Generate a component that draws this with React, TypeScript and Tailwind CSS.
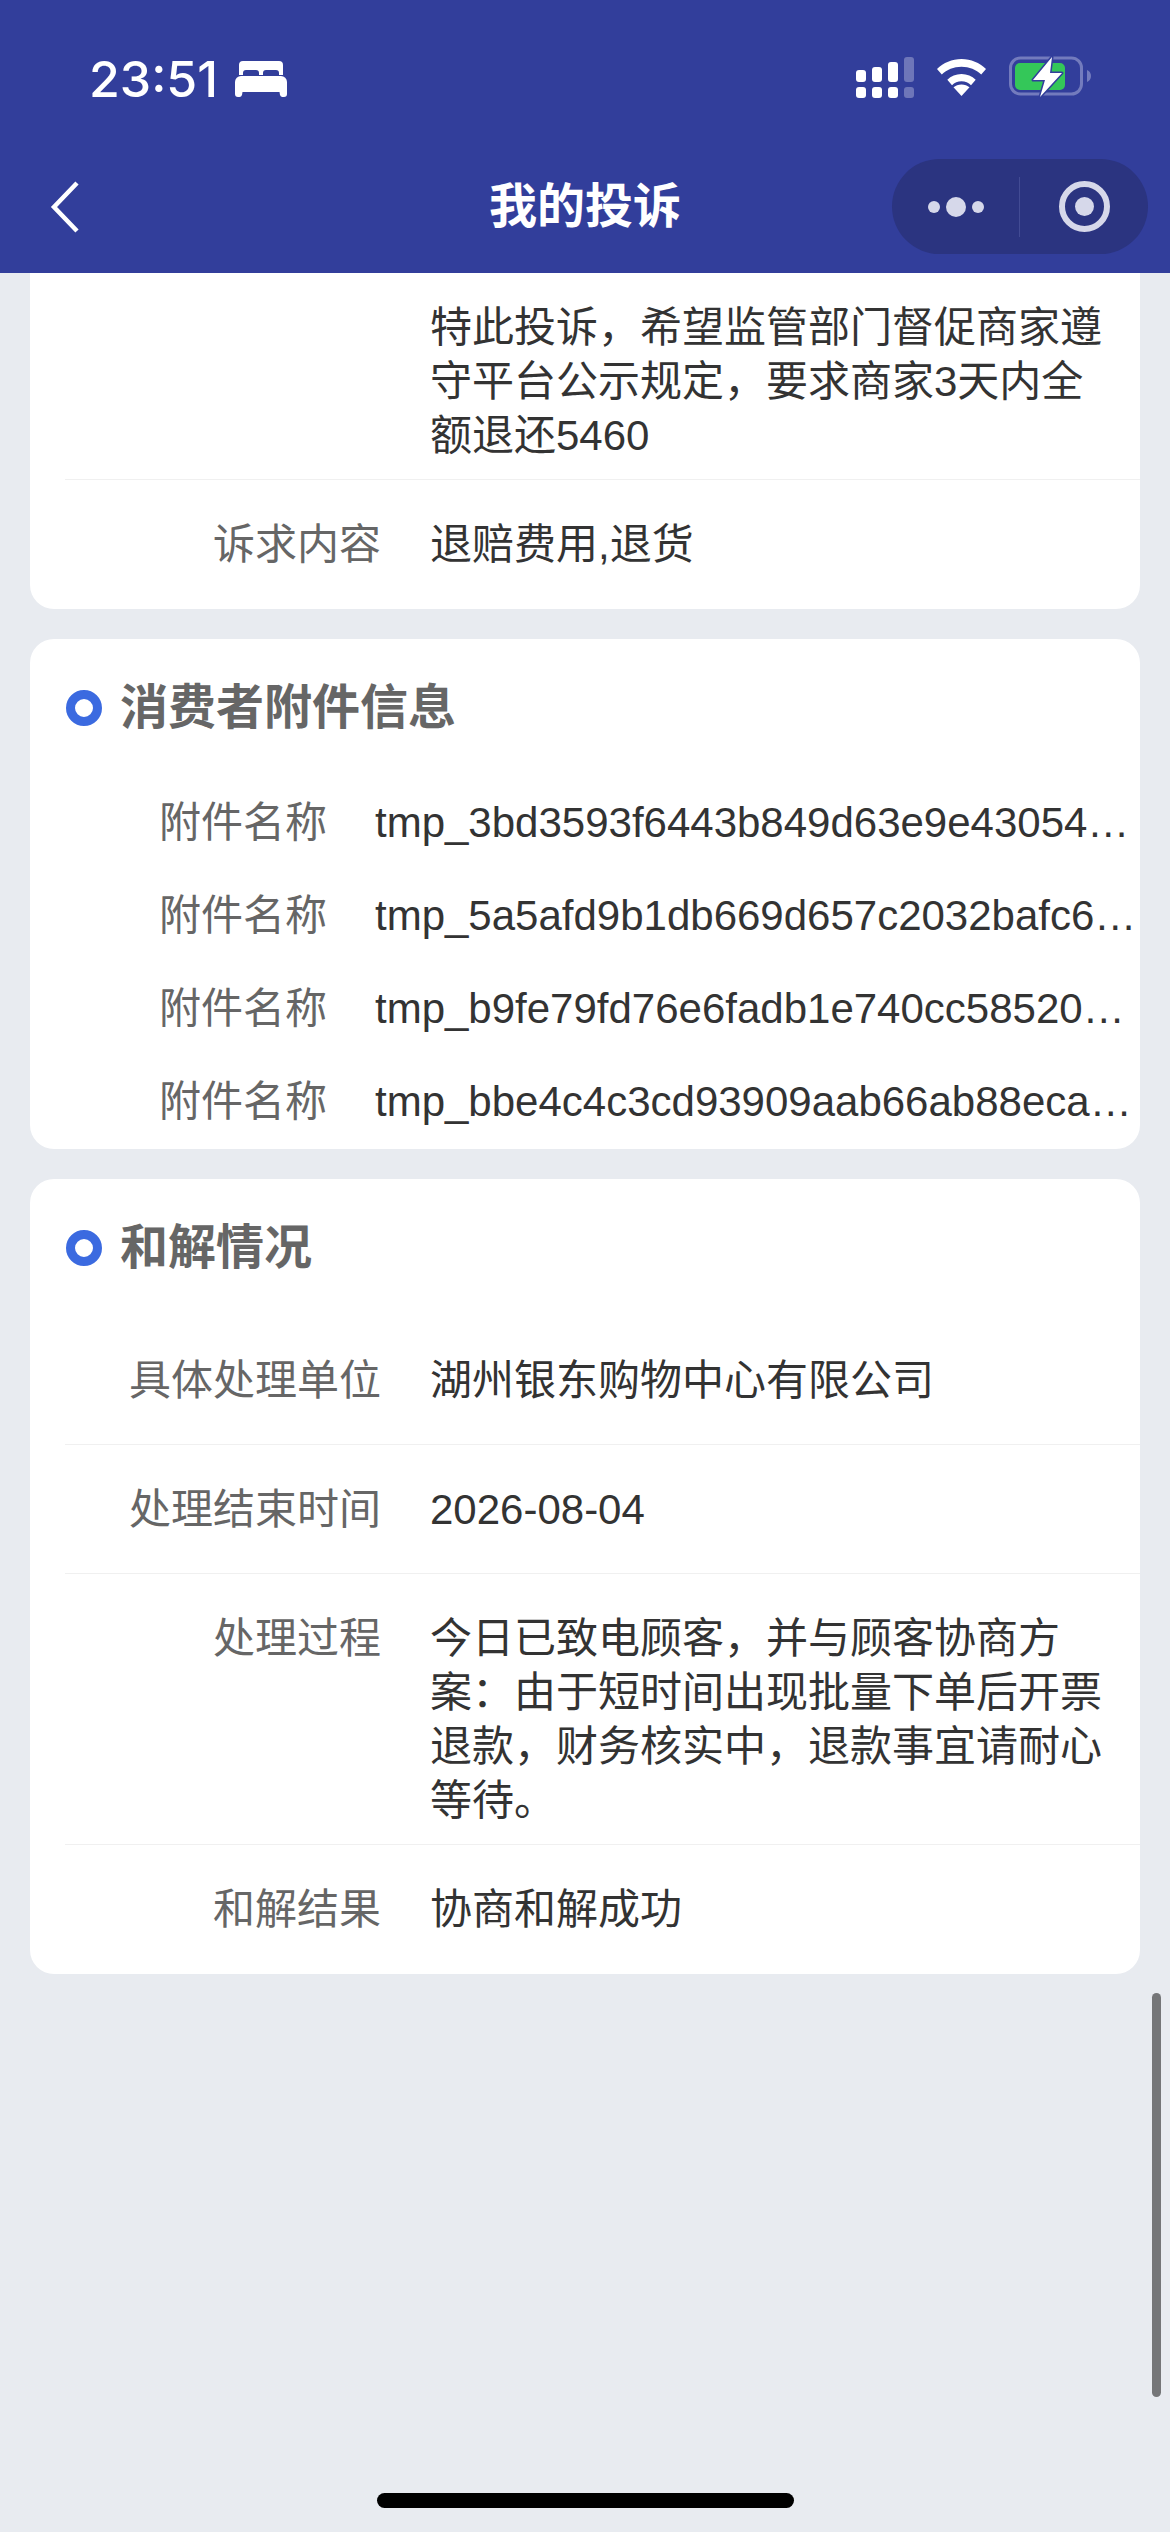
const font = "font-['Liberation_Sans','Noto_Sans_CJK_SC',sans-serif]";

const attachments = [
  "tmp_3bd3593f6443b849d63e9e430548a1c2d7e6f0b91.pdf",
  "tmp_5a5afd9b1db669d657c2032bafc6e41f7d28c03ab.pdf",
  "tmp_b9fe79fd76e6fadb1e740cc58520d3a97b41e6f02.pdf",
  "tmp_bbe4c4c3cd93909aab66ab88eca7f02d51c96e3b8.pdf",
];

function StatusIcons() {
  return (
    <svg width="240" height="44" viewBox="0 0 240 44" className="block">
      <g fill="#fff">
        <rect x="0" y="15" width="10" height="12" rx="3" />
        <rect x="16" y="12" width="10" height="15" rx="3" />
        <rect x="32" y="7" width="10" height="20" rx="3" />
        <rect x="0" y="32" width="10" height="11" rx="3" />
        <rect x="16" y="32" width="10" height="11" rx="3" />
        <rect x="32" y="32" width="10" height="11" rx="3" />
      </g>
      <rect x="48" y="2" width="10" height="25" rx="3" fill="#6e76b9" />
      <rect x="48" y="32" width="10" height="11" rx="3" fill="#6e76b9" />
      <path
        d="M105.5 4c9.5 0 18 3.800 24.500 10l-4.800 5.500c-5-4.800-12-7.800-19.700-7.800s-14.700 3-19.700 7.800L81 14c6.500-6.200 15-10 24.500-10z"
        fill="#fff"
      />
      <path
        d="M105.500 19c5.500 0 10.500 2.200 14.200 5.800l-4.700 5.400c-2.400-2.400-5.800-3.900-9.500-3.900s-7.100 1.500-9.500 3.900l-4.700-5.400c3.700-3.600 8.700-5.800 14.200-5.800z"
        fill="#fff"
      />
      <path d="M105.500 41l-8-8.700c2-1.800 4.900-2.900 8-2.900s6 1.100 8 2.900z" fill="#fff" />
      <rect x="154.500" y="3" width="71" height="36" rx="10" fill="none" stroke="#737bbd" strokeWidth="3" />
      <path d="M231 15c2.500 1 4 3 4 6s-1.500 5-4 6z" fill="#737bbd" />
      <rect x="159" y="8" width="50" height="27" rx="5" fill="#34c759" />
      <path
        d="M196 2 177 25h12l-5 17 22-24h-12z"
        fill="#fff"
        stroke="#323e9b"
        strokeWidth="3"
        strokeLinejoin="round"
        paintOrder="stroke"
      />
    </svg>
  );
}

function Capsule() {
  return (
    <div className="flex h-[95px] w-[256px] items-center rounded-full bg-[#2b3480]">
      <div className="flex h-[60px] w-[128px] items-center justify-center gap-[6px] border-r border-[#424b94]">
        <span className="h-[12px] w-[12px] rounded-full bg-[#d6d8ea]" />
        <span className="h-[20px] w-[20px] rounded-full bg-[#d6d8ea]" />
        <span className="h-[12px] w-[12px] rounded-full bg-[#d6d8ea]" />
      </div>
      <div className="flex flex-1 items-center justify-center">
        <div className="flex h-[51px] w-[51px] items-center justify-center rounded-full border-[6px] border-[#d6d8ea]">
          <span className="h-[19px] w-[19px] rounded-full bg-[#d6d8ea]" />
        </div>
      </div>
    </div>
  );
}

function Header() {
  return (
    <header className="h-[273px] bg-[#323e9b] text-white">
      <div className="flex h-[159px] items-start justify-between pl-[89px] pr-[74px] pt-[55px]">
        <div className="flex items-center gap-[17px]">
          <span className="font-['Inter',sans-serif] text-[50px] font-medium leading-[48px]">23:51</span>
          <svg width="52" height="36" viewBox="0 0 52 36" fill="#fff">
            <path d="M8 0h36a4 4 0 0 1 4 4v10h-4V12a3 3 0 0 0-3-3H31a3 3 0 0 0-3 3v2h-4v-2a3 3 0 0 0-3-3H11a3 3 0 0 0-3 3v2H4V4a4 4 0 0 1 4-4z" />
            <path d="M6 15h40a6 6 0 0 1 6 6v12a3 3 0 0 1-3 3h-1a3 3 0 0 1-3-2l-.500-3H7.500L7 34a3 3 0 0 1-3 2H3a3 3 0 0 1-3-3V21a6 6 0 0 1 6-6z" />
          </svg>
        </div>
        <StatusIcons />
      </div>
      <div className="grid grid-cols-[1fr_auto_1fr] items-start">
        <div className="pl-[50px] pt-[22px]">
          <svg width="30" height="52" viewBox="0 0 30 52" fill="none" stroke="#fff" strokeWidth="4.500">
            <path d="M27 2 4 26l23 24" />
          </svg>
        </div>
        <h1 className="pt-[22px] text-[48px] font-semibold leading-[52px]">我的投诉</h1>
        <div className="flex justify-end pr-[22px]">
          <Capsule />
        </div>
      </div>
    </header>
  );
}

function Row({ label, children }: { label: string; children: React.ReactNode }) {
  return (
    <div className="ml-[35px] flex min-h-[129px] border-b border-[#f0f0f0] pb-[16px] pt-[38px] text-[42px] leading-[54px] last:border-b-0">
      <div className="w-[316px] shrink-0 text-right text-[#666]">{label}</div>
      <div className="ml-[49px] w-[690px] text-[#333]">{children}</div>
    </div>
  );
}

function CardTitle({ title }: { title: string }) {
  return (
    <div className="flex h-[137px] items-center pl-[36px]">
      <span className="h-[36px] w-[36px] rounded-full border-[9px] border-[#3b6ae0]" />
      <h2 className="ml-[18px] text-[48px] font-semibold leading-[56px] text-[#666]">{title}</h2>
    </div>
  );
}

export default function App() {
  return (
    <div className={`relative h-[2532px] w-[1170px] overflow-hidden bg-[#e8ebf0] ${font}`}>
      <Header />
      <main className="flex flex-col gap-[30px] px-[30px]">
        <section className="rounded-b-[24px] bg-white">
          <div className="ml-[35px] flex border-b border-[#f0f0f0] pb-[16px] pt-[28px] text-[42px] leading-[54px]">
            <div className="w-[316px] shrink-0" />
            <div className="ml-[49px] w-[690px] text-[#333]">
              特此投诉，希望监管部门督促商家遵守平台公示规定，要求商家3天内全额退还5460
            </div>
          </div>
          <Row label="诉求内容">退赔费用,退货</Row>
        </section>

        <section className="rounded-[24px] bg-white pb-px">
          <CardTitle title="消费者附件信息" />
          {attachments.map((name) => (
            <div key={name} className="flex h-[93px] items-center text-[42px]">
              <div className="w-[297px] shrink-0 text-right text-[#666]">附件名称</div>
              <div className="ml-[48px] w-[762px] truncate text-[#333]">{name}</div>
            </div>
          ))}
        </section>

        <section className="rounded-[24px] bg-white">
          <CardTitle title="和解情况" />
          <Row label="具体处理单位">湖州银东购物中心有限公司</Row>
          <Row label="处理结束时间">2026-08-04</Row>
          <Row label="处理过程">今日已致电顾客，并与顾客协商方案：由于短时间出现批量下单后开票退款，财务核实中，退款事宜请耐心等待。</Row>
          <Row label="和解结果">协商和解成功</Row>
        </section>
      </main>

      <div className="absolute left-[1152px] top-[1993px] h-[404px] w-[9px] rounded-full bg-[#757678]" />
      <div className="absolute left-[377px] top-[2493px] h-[15px] w-[417px] rounded-full bg-black" />
    </div>
  );
}
